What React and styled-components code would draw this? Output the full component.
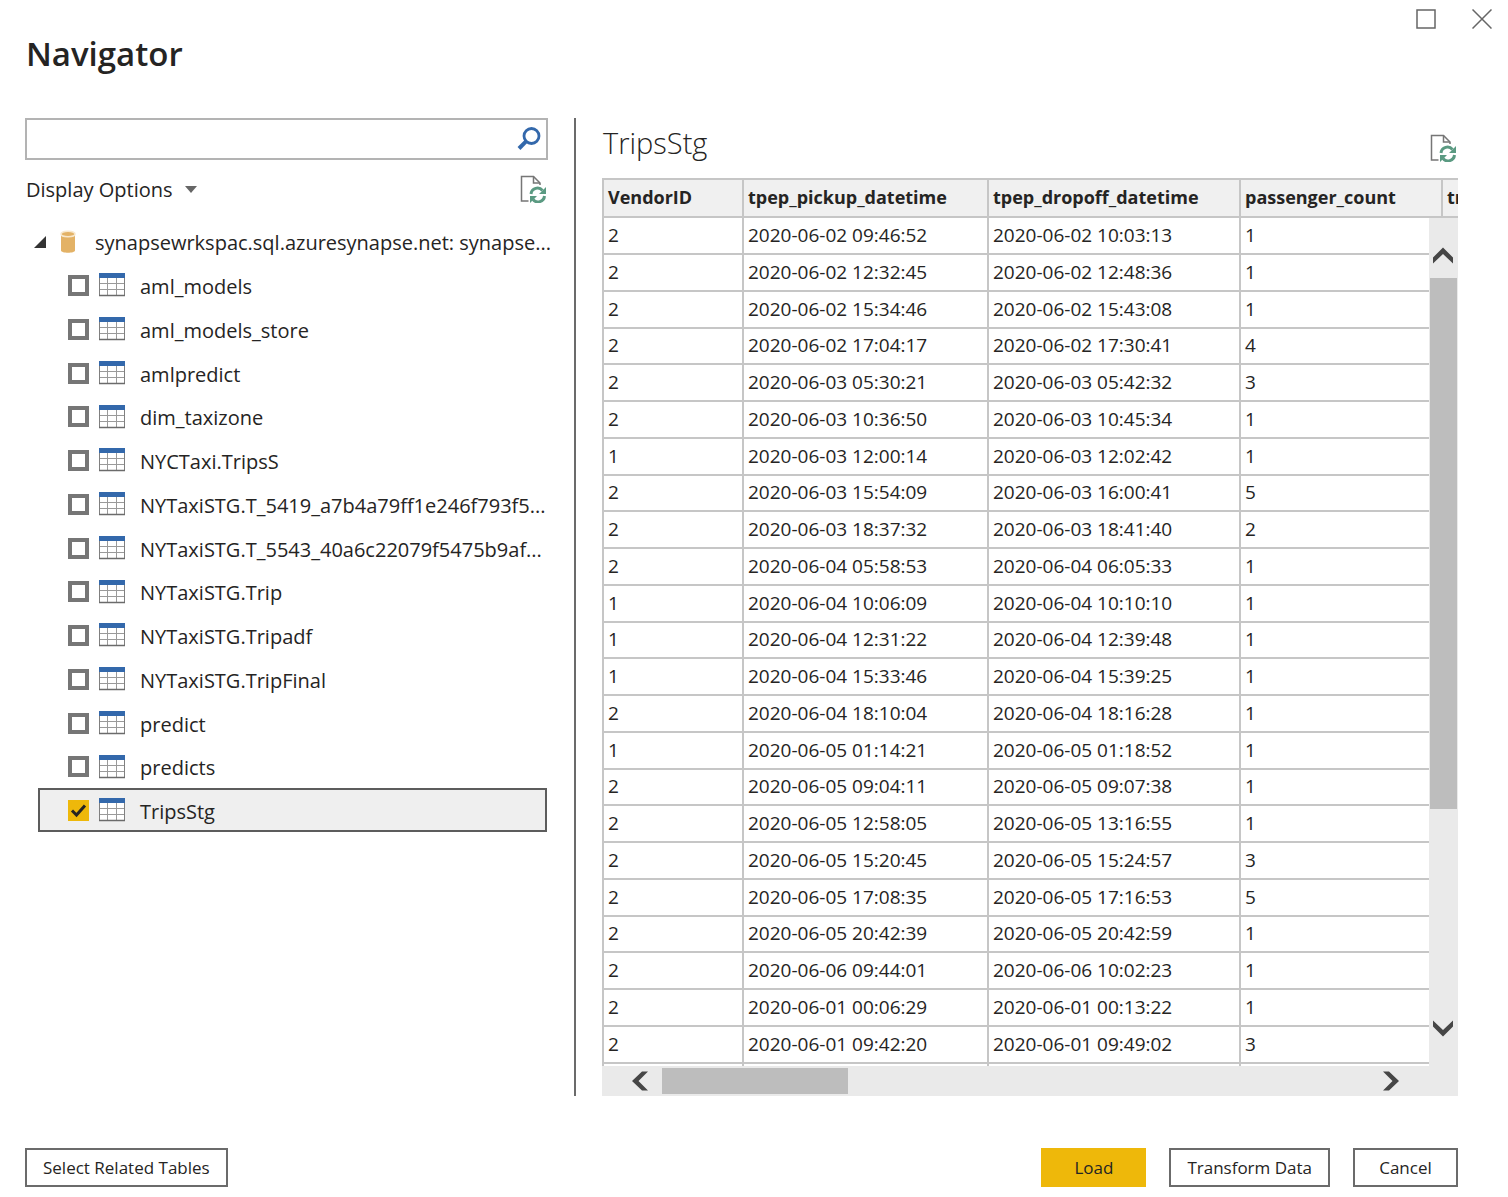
import React, { useState } from "react";

import styled, { createGlobalStyle, css } from "styled-components";

const GlobalStyle = createGlobalStyle`
  *,
  *::before,
  *::after {
    box-sizing: border-box;
  }
  body {
    margin: 0;
    background-color: #ffffff;
    color: #252423;
    font-family: "Open Sans", "Noto Sans", sans-serif;
    font-size: 20px;
  }
  button,
  input {
    font-family: inherit;
    color: inherit;
  }
  svg {
    flex: none;
  }
`;

const Dialog = styled.div`
  display: flex;
  flex-direction: column;
  height: 100vh;
  padding: 0 50px 10px 25px;
`;

const TitleBar = styled.header`
  display: flex;
  justify-content: space-between;
  height: 118px;
  padding-left: 1px;
  margin-right: -38px;
`;

const Title = styled.h1`
  margin: 30px 0 0;
  font-size: 33px;
  line-height: 48px;
  font-weight: 600;
`;

const WindowControls = styled.div`
  display: flex;
  gap: 28px;
  padding-top: 5px;
`;

const IconButton = styled.button`
  display: flex;
  align-items: center;
  justify-content: center;
  width: 28px;
  height: 28px;
  padding: 0;
  border: none;
  background: none;
  cursor: pointer;
`;

const Panels = styled.main`
  display: grid;
  grid-template-columns: 551fr 882fr;
  flex: 1;
  min-height: 0;
`;

const SourcePanel = styled.section`
  min-width: 0;
  padding-right: 26px;
  border-right: 2px solid #6b6b6b;
`;

const SearchBox = styled.div`
  display: flex;
  align-items: center;
  height: 42px;
  padding-right: 3px;
  border: 2px solid #b3b3b3;
`;

const SearchInput = styled.input`
  flex: 1;
  min-width: 0;
  height: 100%;
  padding: 0 8px;
  border: none;
  outline: none;
  background: none;
  font-size: 20px;
`;

const OptionsBar = styled.div`
  display: flex;
  align-items: center;
  justify-content: space-between;
  height: 58px;
  padding: 0 1px;
`;

const DisplayOptions = styled.button`
  display: flex;
  align-items: center;
  gap: 12px;
  padding: 0;
  border: none;
  background: none;
  font-size: 20px;
  cursor: pointer;
`;

const SourceRow = styled.div`
  display: flex;
  align-items: center;
  height: 45px;
  padding: 3px 0 0 8px;
`;

const SourceName = styled.span`
  white-space: nowrap;
`;

const TableList = styled.ul`
  margin: 0 1px 0 13px;
  padding: 0;
  list-style: none;
`;

const TableItem = styled.li`
  height: 44px;
  border: 2px solid transparent;
  &:nth-child(4n) {
    height: 43px;
  }
  ${({ $selected }) =>
    $selected &&
    css`
      border-color: #5c5c5c;
      background-color: #efefef;
    `}
`;

const TableLabel = styled.label`
  display: flex;
  align-items: center;
  height: 100%;
  padding-left: 28px;
  cursor: pointer;
`;

const TableName = styled.span`
  margin-left: 15px;
  padding-top: 2px;
  white-space: nowrap;
`;

const CheckBox = styled.input`
  appearance: none;
  flex: none;
  width: 21px;
  height: 21px;
  margin: 0 10px 0 0;
  border: 4px solid #767676;
  background-color: #ffffff;
  &:checked {
    border: none;
    background: #eeb80a
      url("data:image/svg+xml,%3Csvg xmlns='http://www.w3.org/2000/svg' viewBox='0 0 21 21'%3E%3Cpath d='M4 10.500l4.500 4.500L17 5.500' fill='none' stroke='%23252423' stroke-width='3'/%3E%3C/svg%3E");
  }
`;

const DatabaseSvg = styled.svg`
  margin: 0 19px 0 13px;
`;

const PreviewPanel = styled.section`
  display: flex;
  flex-direction: column;
  min-width: 0;
  min-height: 0;
  padding-left: 26px;
`;

const PreviewHeader = styled.div`
  display: flex;
  align-items: flex-end;
  justify-content: space-between;
  height: 60px;
  padding: 0 1px 16px;
`;

const PreviewTitle = styled.h2`
  margin: 0;
  font-size: 29px;
  line-height: 38px;
  font-weight: 300;
`;

const GridFrame = styled.div`
  display: grid;
  grid-template-columns: minmax(0, 1fr) 29px;
  grid-template-rows: 40px minmax(0, 1fr) 30px;
  flex: 1;
  min-height: 0;
`;

const GridViewport = styled.div`
  grid-area: 1 / 1 / 3 / 3;
  overflow: hidden;
`;

const DataTable = styled.table`
  width: 1040px;
  table-layout: fixed;
  border-collapse: separate;
  border-spacing: 0;
  border-left: 2px solid #c6c6c6;
  font-size: 19px;
  line-height: 24px;
  white-space: nowrap;
`;

const HeadCell = styled.th`
  height: 40px;
  padding: 0 4px 2px;
  border: solid #c6c6c6;
  border-width: 2px 2px 2px 0;
  background-color: #f0f0f0;
  text-align: left;
  font-size: 18px;
  font-weight: 700;
`;

const DataRow = styled.tr`
  height: 37px;
  &:nth-child(4n) {
    height: 36px;
  }
`;

const DataCell = styled.td`
  padding: 0 4px 2px;
  border: solid #c6c6c6;
  border-width: 0 2px 2px 0;
`;

const VerticalBar = styled.div`
  grid-area: 2 / 2 / 3 / 3;
  z-index: 1;
  display: flex;
  flex-direction: column;
  padding: 24px 0;
  background-color: #eaeaea;
`;

const HorizontalBar = styled.div`
  grid-area: 3 / 1 / 4 / 3;
  display: flex;
  align-items: center;
  padding: 0 54px 0 24px;
  background-color: #eaeaea;
`;

const Track = styled.div`
  display: flex;
  flex: 1;
  flex-direction: ${({ $vertical }) => ($vertical ? "column" : "row")};
  align-self: stretch;
  margin: ${({ $vertical }) => ($vertical ? "8px 1px" : "2px 8px")};
`;

const Thumb = styled.div`
  flex: 0 0 ${({ $size }) => $size};
  background-color: #bdbdbd;
`;

const Footer = styled.footer`
  display: flex;
  gap: 23px;
  margin-top: 52px;
`;

const Button = styled.button`
  min-width: 105px;
  height: 39px;
  margin-right: ${({ $pushRest }) => ($pushRest ? "auto" : "0")};
  padding: 0 16px;
  border: 2px solid ${({ $primary }) => ($primary ? "#eeb80a" : "#6b6b6b")};
  background-color: ${({ $primary }) => ($primary ? "#eeb80a" : "#ffffff")};
  font-size: 17px;
  cursor: pointer;
`;

const RefreshIcon = () => (
  <svg width="28" height="28" viewBox="0 0 28 28" fill="none">
    <path d="M9.500 26H2.500V1.500H14.500L21 8V10" stroke="#767676" strokeWidth="1.500" />
    <path d="M14.500 1.500V8H21" stroke="#767676" strokeWidth="1.500" />
    <path d="M12 19A6.500 6.500 0 0 1 23.500 15.500M25.500 21A6.500 6.500 0 0 1 14 24.500" stroke="#5b9a82" strokeWidth="3" />
    <path d="M27 12V19H20ZM11 28V21H18Z" fill="#5b9a82" />
  </svg>
);

const SearchIcon = () => (
  <svg width="26" height="26" viewBox="0 0 26 26" fill="none" stroke="#3368ab">
    <circle cx="15.500" cy="10" r="7.500" strokeWidth="2.800" />
    <path d="M10.300 15.200L3 22.500" strokeWidth="4" />
  </svg>
);

const TableIcon = () => (
  <svg width="26" height="24" viewBox="0 0 26 24" fill="none">
    <rect x="0.500" y="0.500" width="25" height="22" fill="#fff" stroke="#808080" />
    <path d="M8.500 5V22M17.500 5V22M1 10.500H25M1 16.500H25" stroke="#9a9a9a" />
    <path d="M0 22.500H26" stroke="#6b6b6b" strokeWidth="1.500" />
    <rect width="26" height="5" fill="#3368ab" />
  </svg>
);

const DatabaseIcon = () => (
  <DatabaseSvg width="16" height="24" viewBox="0 0 16 24">
    <path d="M1 4V20.500C1 23.500 15 23.500 15 20.500V4Z" fill="#e3b266" />
    <ellipse cx="8" cy="4" rx="7" ry="2.800" fill="#e3b266" stroke="#f8e8cd" strokeWidth="1.500" />
  </DatabaseSvg>
);

const arrowPaths = {
  up: "M1 12.500L11 2.500L21 12.500V18.500L11 9L1 18.500Z",
  down: "M1 3.500V9.500L11 19.500L21 9.500V3.500L11 13Z",
  left: "M13 1.500H19L9.500 11L19 20.500H13L3 11Z",
  right: "M4 1.500H10L20 11L10 20.500H4L13.500 11Z",
};

const ScrollArrow = ({ direction }) => (
  <IconButton aria-label={`Scroll ${direction}`}>
    <svg width="22" height="22" viewBox="0 0 22 22">
      <path d={arrowPaths[direction]} fill="#464646" />
    </svg>
  </IconButton>
);

const tables = [
  "aml_models",
  "aml_models_store",
  "amlpredict",
  "dim_taxizone",
  "NYCTaxi.TripsS",
  "NYTaxiSTG.T_5419_a7b4a79ff1e246f793f5...",
  "NYTaxiSTG.T_5543_40a6c22079f5475b9af...",
  "NYTaxiSTG.Trip",
  "NYTaxiSTG.Tripadf",
  "NYTaxiSTG.TripFinal",
  "predict",
  "predicts",
  "TripsStg",
];

const columns = [
  { name: "VendorID", width: 140 },
  { name: "tpep_pickup_datetime", width: 245 },
  { name: "tpep_dropoff_datetime", width: 252 },
  { name: "passenger_count", width: 202 },
  { name: "trip_distance", width: 199 },
];

const trips = [
  ["2", "2020-06-02 09:46:52", "2020-06-02 10:03:13", "1"],
  ["2", "2020-06-02 12:32:45", "2020-06-02 12:48:36", "1"],
  ["2", "2020-06-02 15:34:46", "2020-06-02 15:43:08", "1"],
  ["2", "2020-06-02 17:04:17", "2020-06-02 17:30:41", "4"],
  ["2", "2020-06-03 05:30:21", "2020-06-03 05:42:32", "3"],
  ["2", "2020-06-03 10:36:50", "2020-06-03 10:45:34", "1"],
  ["1", "2020-06-03 12:00:14", "2020-06-03 12:02:42", "1"],
  ["2", "2020-06-03 15:54:09", "2020-06-03 16:00:41", "5"],
  ["2", "2020-06-03 18:37:32", "2020-06-03 18:41:40", "2"],
  ["2", "2020-06-04 05:58:53", "2020-06-04 06:05:33", "1"],
  ["1", "2020-06-04 10:06:09", "2020-06-04 10:10:10", "1"],
  ["1", "2020-06-04 12:31:22", "2020-06-04 12:39:48", "1"],
  ["1", "2020-06-04 15:33:46", "2020-06-04 15:39:25", "1"],
  ["2", "2020-06-04 18:10:04", "2020-06-04 18:16:28", "1"],
  ["1", "2020-06-05 01:14:21", "2020-06-05 01:18:52", "1"],
  ["2", "2020-06-05 09:04:11", "2020-06-05 09:07:38", "1"],
  ["2", "2020-06-05 12:58:05", "2020-06-05 13:16:55", "1"],
  ["2", "2020-06-05 15:20:45", "2020-06-05 15:24:57", "3"],
  ["2", "2020-06-05 17:08:35", "2020-06-05 17:16:53", "5"],
  ["2", "2020-06-05 20:42:39", "2020-06-05 20:42:59", "1"],
  ["2", "2020-06-06 09:44:01", "2020-06-06 10:02:23", "1"],
  ["2", "2020-06-01 00:06:29", "2020-06-01 00:13:22", "1"],
  ["2", "2020-06-01 09:42:20", "2020-06-01 09:49:02", "3"],
  ["", "", "", ""],
];

const App = () => {
  const [checked, setChecked] = useState(["TripsStg"]);

  const toggleTable = (name) => {
    setChecked(
      checked.includes(name)
        ? checked.filter((item) => item !== name)
        : [...checked, name]
    );
  };

  return (
    <Dialog>
      <GlobalStyle />
      <TitleBar>
        <Title>Navigator</Title>
        <WindowControls>
          <IconButton aria-label="Maximize">
            <svg width="20" height="20" viewBox="0 0 20 20" fill="none" stroke="#666">
              <rect x="1" y="1" width="18" height="18" strokeWidth="1.500" />
            </svg>
          </IconButton>
          <IconButton aria-label="Close">
            <svg width="20" height="20" viewBox="0 0 20 20" fill="none" stroke="#666">
              <path d="M0.500 0.500L19.500 19.500M19.500 0.500L0.500 19.500" strokeWidth="1.500" />
            </svg>
          </IconButton>
        </WindowControls>
      </TitleBar>
      <Panels>
        <SourcePanel>
          <SearchBox>
            <SearchInput type="text" aria-label="Search" />
            <IconButton aria-label="Search">
              <SearchIcon />
            </IconButton>
          </SearchBox>
          <OptionsBar>
            <DisplayOptions>
              Display Options
              <svg width="12" height="7" viewBox="0 0 12 7">
                <path d="M0 0H12L6 7Z" fill="#666" />
              </svg>
            </DisplayOptions>
            <IconButton aria-label="Refresh">
              <RefreshIcon />
            </IconButton>
          </OptionsBar>
          <SourceRow>
            <svg width="14" height="14" viewBox="0 0 14 14">
              <path d="M13 1V13H1Z" fill="#333" />
            </svg>
            <DatabaseIcon />
            <SourceName>synapsewrkspac.sql.azuresynapse.net: synapse...</SourceName>
          </SourceRow>
          <TableList>
            {tables.map((name) => (
              <TableItem key={name} $selected={checked.includes(name)}>
                <TableLabel>
                  <CheckBox
                    type="checkbox"
                    checked={checked.includes(name)}
                    onChange={() => toggleTable(name)}
                  />
                  <TableIcon />
                  <TableName>{name}</TableName>
                </TableLabel>
              </TableItem>
            ))}
          </TableList>
        </SourcePanel>
        <PreviewPanel>
          <PreviewHeader>
            <PreviewTitle>TripsStg</PreviewTitle>
            <IconButton aria-label="Refresh preview">
              <RefreshIcon />
            </IconButton>
          </PreviewHeader>
          <GridFrame>
            <GridViewport>
              <DataTable>
                <colgroup>
                  {columns.map((column) => (
                    <col key={column.name} width={column.width} />
                  ))}
                </colgroup>
                <thead>
                  <tr>
                    {columns.map((column) => (
                      <HeadCell key={column.name}>{column.name}</HeadCell>
                    ))}
                  </tr>
                </thead>
                <tbody>
                  {trips.map((trip, index) => (
                    <DataRow key={index}>
                      {trip.map((value, cell) => (
                        <DataCell key={cell}>{value}</DataCell>
                      ))}
                      <DataCell />
                    </DataRow>
                  ))}
                </tbody>
              </DataTable>
            </GridViewport>
            <VerticalBar>
              <ScrollArrow direction="up" />
              <Track $vertical>
                <Thumb $size="73%" />
              </Track>
              <ScrollArrow direction="down" />
            </VerticalBar>
            <HorizontalBar>
              <ScrollArrow direction="left" />
              <Track>
                <Thumb $size="26.3%" />
              </Track>
              <ScrollArrow direction="right" />
            </HorizontalBar>
          </GridFrame>
        </PreviewPanel>
      </Panels>
      <Footer>
        <Button $pushRest>Select Related Tables</Button>
        <Button $primary>Load</Button>
        <Button>Transform Data</Button>
        <Button>Cancel</Button>
      </Footer>
    </Dialog>
  );
};

export default App;
